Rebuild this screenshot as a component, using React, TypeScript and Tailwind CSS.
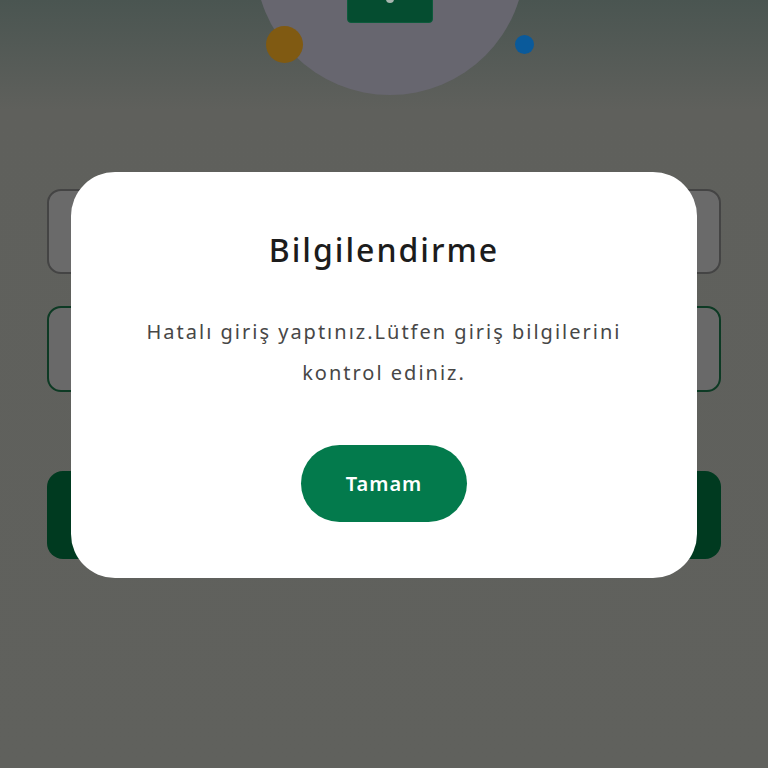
import React from "react";

export default function App() {
  return (
    <div
      className="relative w-[768px] h-[768px] overflow-hidden bg-[linear-gradient(to_bottom,#4a5551_0px,#5f605c_110px,#60615d_768px)]"
      style={{ fontFamily: "'Noto Sans', Lato, sans-serif" }}
    >
      {/* top decoration */}
      <div className="relative h-[189px]">
        <div className="absolute left-[255px] top-[-175px] w-[270px] h-[270px] rounded-full bg-[#67666f]" />
        <div className="absolute left-[347px] top-[-20px] w-[86px] h-[43px] rounded-[4px] bg-[#054d30] border border-[#0d5a3b]">
          <div className="absolute left-[38px] top-[14px] w-[8px] h-[8px] rounded-full bg-[#a9b6b0]" />
        </div>
        <div className="absolute left-[266px] top-[26px] w-[37px] h-[37px] rounded-full bg-[#805a12]" />
        <div className="absolute left-[515px] top-[35px] w-[19px] h-[19px] rounded-full bg-[#0a5a9b]" />
      </div>

      {/* form behind */}
      <div className="flex flex-col px-[47px]">
        <div className="h-[85px] rounded-[14px] border-2 border-[#444444] bg-[#6a6a6a]" />
        <div className="mt-[32px] h-[86px] rounded-[14px] border-2 border-[#0d3a24] bg-[#696969]" />
        <div className="mt-[79px] h-[88px] rounded-[16px] bg-[#003a20]" />
      </div>

      {/* modal */}
      <div className="absolute left-[71px] top-[172px] w-[626px] h-[406px] rounded-[44px] bg-white flex flex-col items-center pt-[58px]">
        <div className="text-[32px] leading-[40px] text-[#1c1c1c] font-medium tracking-[2px]">
          Bilgilendirme
        </div>
        <div className="mt-[41px] text-[20px] leading-[41px] text-[#474747] text-center tracking-[2px] whitespace-nowrap">
          Hatalı giriş yaptınız.Lütfen giriş bilgilerini
          <br />
          kontrol ediniz.
        </div>
        <div className="mt-[52px] w-[166px] h-[77px] rounded-full bg-[#037a4c] flex items-center justify-center text-white text-[20px] font-semibold tracking-[1px]">
          Tamam
        </div>
      </div>
    </div>
  );
}
